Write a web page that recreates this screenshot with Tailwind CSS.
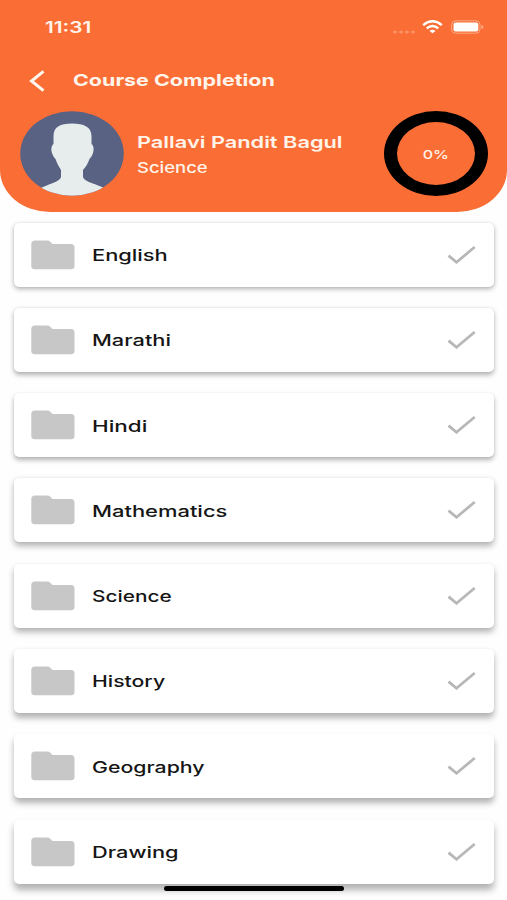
<!DOCTYPE html>
<html lang="en">
<head>
  <meta charset="UTF-8" />
  <meta name="viewport" content="width=device-width, initial-scale=1.0" />
  <title>Course Completion</title>
  <script src="https://cdn.jsdelivr.net/npm/@tailwindcss/browser@4"></script>
</head>
<body class="bg-[#fefefe] font-['Inter',sans-serif]">
  <div class="relative h-[900px] overflow-hidden">
    <header class="h-[211.5px] bg-[#fa6e35] rounded-b-[50px_42px] text-[#fff4ea]">
      <!-- Status bar -->
      <div class="h-[54px] pl-[45px] pr-[23px] flex items-center justify-between">
        <span class="block origin-left scale-x-[1.3] text-[16px] font-semibold leading-5">11:31</span>
        <div class="flex items-center">
          <svg class="w-[24px] h-[4px] mt-[9px] mr-[6px]" viewBox="0 0 24 4" fill="#fff" fill-opacity=".25">
            <ellipse cx="3" cy="2" rx="2" ry="1.5" /><ellipse cx="9" cy="2" rx="2" ry="1.5" />
            <ellipse cx="15" cy="2" rx="2" ry="1.5" /><ellipse cx="21" cy="2" rx="2" ry="1.5" />
          </svg>
          <svg class="w-[21px] h-[14px] mr-[8px]" viewBox="0 0 21 14" fill="none" stroke="#fff" stroke-width="2.5">
            <path d="M1.2 5.1Q10.5-2.5 19.8 5.1" />
            <path d="M4.7 8.4Q10.5 3.7 16.3 8.4" />
            <path d="M7.5 10.9Q10.5 8.5 13.5 10.9L10.5 13.3Z" fill="#fff" stroke="none" />
          </svg>
          <svg class="w-[33px] h-[14px]" viewBox="0 0 33 14">
            <rect x=".6" y=".8" width="28.4" height="12.4" rx="4" fill="none" stroke="#fff" stroke-opacity=".4" />
            <rect x="2.5" y="2.5" width="24.8" height="9" rx="2" fill="#fff" />
            <path d="M30.5 5q2 .6 2 2t-2 2z" fill="#fff" fill-opacity=".45" />
          </svg>
        </div>
      </div>

      <!-- Title bar -->
      <div class="h-[53px] pl-[29px] flex items-center">
        <svg class="w-4 h-[22px] mr-[28px]" viewBox="0 0 16 22" fill="none" stroke="#fff8f0" stroke-width="3">
          <path d="M14.5 1.3 2.5 11l12 9.7" />
        </svg>
        <h1 class="origin-left scale-x-[1.3] text-[16.5px] font-bold leading-5 pb-[2px]">Course Completion</h1>
      </div>

      <!-- Student -->
      <div class="h-[92px] pl-[20px] pr-[19px] flex items-center">
        <svg class="w-[104px] h-[86px] mr-[13px]" viewBox="0 0 104 86">
          <defs><clipPath id="avatar"><ellipse cx="52" cy="43.5" rx="51.8" ry="42.3" /></clipPath></defs>
          <g clip-path="url(#avatar)">
            <rect width="104" height="86" fill="#596283" />
            <path d="M52 13.500C40 13.500 33.500 17 33.500 26V34C31 36 31 40 32 43C33 46 34 47 35.500 49C37 53 39 57 41 60V67C40 72 28 74 19 79V86H86V79C77 74 64 72 63 67V60C66 57 68 53 69.500 49C71 47 72 46 73 43C74 40 74 36 71.500 34V26C71.500 17 64 13.500 52 13.500Z" fill="#e7ecec" />
          </g>
        </svg>
        <div class="flex-1">
          <h2 class="w-fit origin-left scale-x-[1.32] text-[16.5px] font-semibold leading-[26px] whitespace-nowrap">Pallavi Pandit Bagul</h2>
          <p class="w-fit origin-left scale-x-[1.23] text-[15px] font-medium leading-[22px] pt-[2px] -mb-[2px]">Science</p>
        </div>
        <div class="w-[104px] h-[85px] mt-px rounded-[50%] border-x-[13px] border-y-[11px] border-black flex items-center justify-center">
          <span class="scale-x-[1.33] text-[12px] font-medium pt-[2px]">0%</span>
        </div>
      </div>
    </header>

    <main id="subjects" class="pl-[13.5px] pr-[13px] pt-[11px] flex flex-col gap-[21.3px]"></main>

    <!-- Home indicator -->
    <div class="absolute left-[164px] top-[886px] w-[180px] h-[5px] rounded-full bg-black"></div>
  </div>

  <script>
    const subjects = [
      { name: "English", stretch: 1.365 },
      { name: "Marathi", stretch: 1.36 },
      { name: "Hindi", stretch: 1.4 },
      { name: "Mathematics", stretch: 1.37 },
      { name: "Science", stretch: 1.3 },
      { name: "History", stretch: 1.325 },
      { name: "Geography", stretch: 1.33 },
      { name: "Drawing", stretch: 1.36 },
    ];

    const list = document.getElementById("subjects");

    subjects.forEach((subject, i) => {
      const card = document.createElement("div");
      card.className = "h-16 shrink-0 pl-[17.5px] pr-[18px] bg-white rounded-[5px] flex items-center";
      // Shadows fall lower the further down the list a card is
      card.style.boxShadow = `0 ${2 + i * 0.5}px ${5 + i * 0.3}px rgba(0,0,0,.3), 0 0 2px rgba(0,0,0,${0.08 - i * 0.01})`;
      card.innerHTML = `
        <svg class="w-[44px] h-[30px] mr-[17px]" viewBox="0 0 44 30" fill="#c7c7c7">
          <path d="M4 .5H16.500Q18 .5 19 1.500L21.500 4H40Q43.500 4 43.500 7.500V26Q43.500 29.300 40 29.300H4Q.3 29.300 .3 26V4Q.3 .5 4 .5Z" />
        </svg>
        <span class="origin-left text-[16px] leading-5 font-medium text-[#151515] pt-px" style="transform: scaleX(${subject.stretch})">${subject.name}</span>
        <svg class="w-[29px] h-[20px] ml-auto" viewBox="0 0 29 20" fill="none" stroke="#b7b7b7" stroke-width="2.8">
          <path d="M1.500 10.700 9.500 17.300 27.700 2" />
        </svg>`;
      list.appendChild(card);
    });
  </script>
</body>
</html>
